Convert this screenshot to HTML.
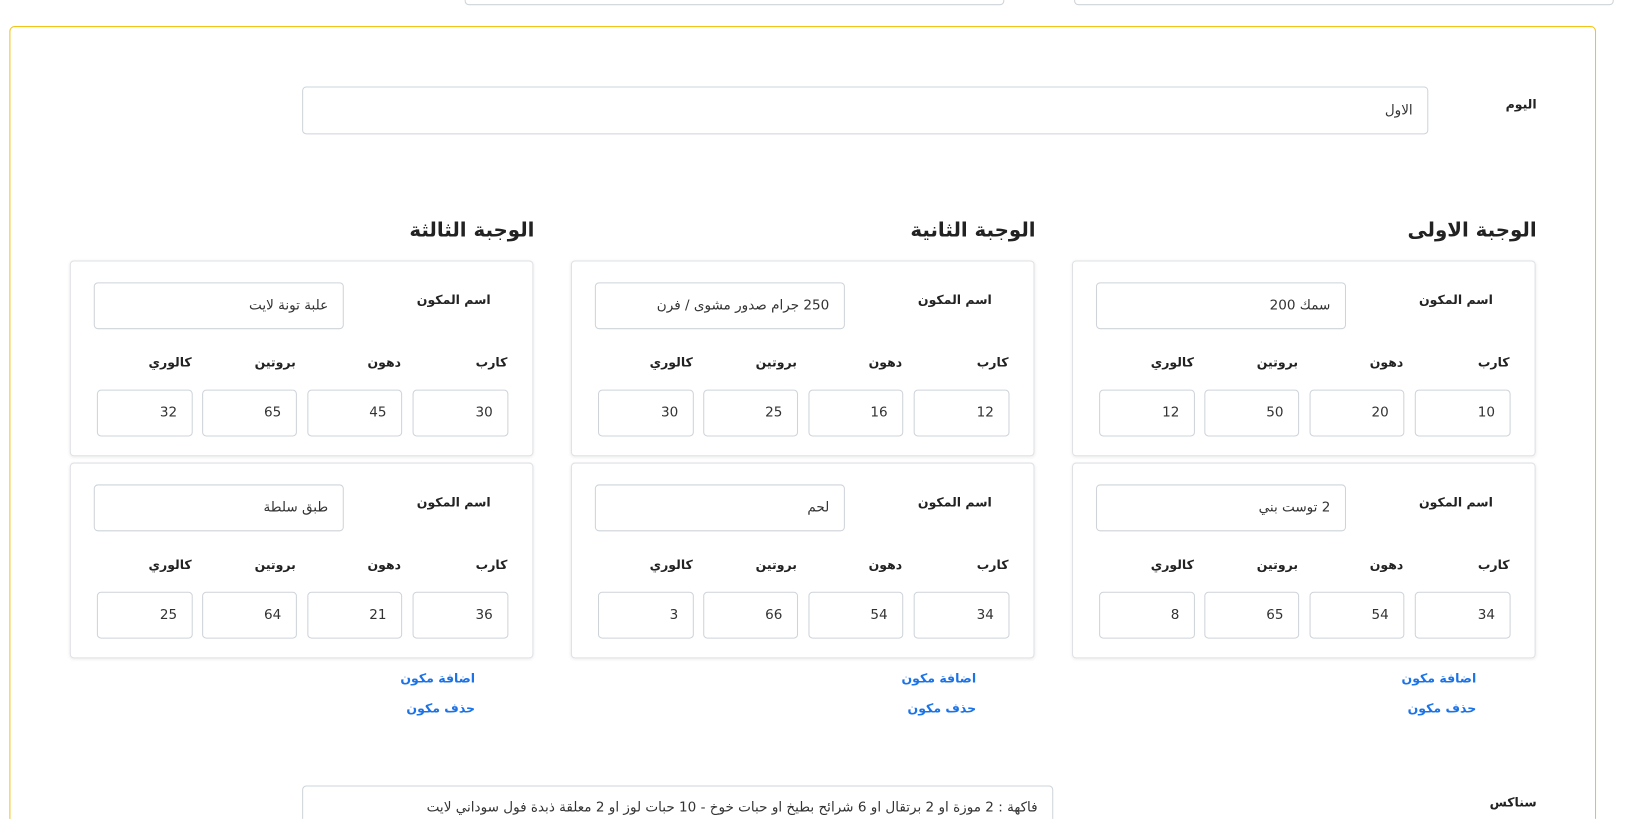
<!DOCTYPE html>
<html><head><meta charset="utf-8"><style>
*{box-sizing:border-box;margin:0;padding:0}
html,body{width:1634px;height:819px;overflow:hidden;background:#fff}
#w{position:absolute;left:0;top:0;width:1568px;height:786px;overflow:hidden;transform:scale(1.0418);transform-origin:0 0;font-family:"DejaVu Sans","Liberation Sans",sans-serif;color:#222;direction:rtl}
.a{position:absolute}
.in{position:absolute;border:1px solid #ced4da;border-radius:4px;background:#fff;font-size:13px;color:#333;text-align:right;padding-right:14px;display:flex;align-items:center}
.lb{position:absolute;font-size:12px;font-weight:bold;color:#222;white-space:nowrap}
.card{position:absolute;width:445px;height:188px;border:1px solid #dfe1e5;border-radius:4px;box-shadow:0 1px 3px rgba(0,0,0,.08);background:#fff}
h3{position:absolute;font-size:19px;font-weight:bold;white-space:nowrap}
.lk{position:absolute;font-size:12px;font-weight:bold;color:#1a73e8;white-space:nowrap}
</style></head><body><div id="w">
<div class="a" style="left:446px;top:-10px;width:518px;height:15px;border:1px solid #ced4da;border-radius:4px"></div>
<div class="a" style="left:1031px;top:-10px;width:518px;height:15px;border:1px solid #ced4da;border-radius:4px"></div>
<div class="a" style="left:9px;top:25px;width:1523px;height:850px;border:1px solid #f2c318;border-radius:5px"></div>

<div class="lb" style="right:93px;top:93px">اليوم</div>
<div class="in" style="left:290px;top:83px;width:1081px;height:46px">الاول</div>

<h3 style="right:93px;top:210px">الوجبة الاولى</h3>
<h3 style="right:574px;top:210px">الوجبة الثانية</h3>
<h3 style="right:1055px;top:210px">الوجبة الثالثة</h3>

<div class="lk" style="right:151px;top:644px">اضافة مكون</div>
<div class="lk" style="right:151px;top:673px">حذف مكون</div>
<div class="lk" style="right:631px;top:644px">اضافة مكون</div>
<div class="lk" style="right:631px;top:673px">حذف مكون</div>
<div class="lk" style="right:1112px;top:644px">اضافة مكون</div>
<div class="lk" style="right:1112px;top:673px">حذف مكون</div>

<div class="lb" style="right:93px;top:763px">سناكس</div>
<div class="in" style="left:290px;top:754px;width:721px;height:46px;align-items:flex-start;padding-top:13px">فاكهة : 2 موزة او 2 برتقال او 6 شرائح بطيخ او  حبات خوخ  - 10 حبات لوز او 2 معلقة ذبدة فول سوداني لايت</div>

<div class="card" style="left:1029px;top:250px">
<div class="lb" style="right:40px;top:30px">اسم المكون</div>
<div class="in" style="left:22px;top:20px;width:240px;height:45px">سمك 200</div>
<div class="lb" style="left:26px;width:90px;top:90px">كالوري</div><div class="lb" style="left:126px;width:90px;top:90px">بروتين</div><div class="lb" style="left:227px;width:90px;top:90px">دهون</div><div class="lb" style="left:328px;width:91px;top:90px">كارب</div>
<div class="in" style="left:25px;top:123px;width:92px;height:45px">12</div><div class="in" style="left:126px;top:123px;width:91px;height:45px">50</div><div class="in" style="left:227px;top:123px;width:91px;height:45px">20</div><div class="in" style="left:328px;top:123px;width:92px;height:45px">10</div>
</div>
<div class="card" style="left:1029px;top:444px">
<div class="lb" style="right:40px;top:30px">اسم المكون</div>
<div class="in" style="left:22px;top:20px;width:240px;height:45px">2 توست بني</div>
<div class="lb" style="left:26px;width:90px;top:90px">كالوري</div><div class="lb" style="left:126px;width:90px;top:90px">بروتين</div><div class="lb" style="left:227px;width:90px;top:90px">دهون</div><div class="lb" style="left:328px;width:91px;top:90px">كارب</div>
<div class="in" style="left:25px;top:123px;width:92px;height:45px">8</div><div class="in" style="left:126px;top:123px;width:91px;height:45px">65</div><div class="in" style="left:227px;top:123px;width:91px;height:45px">54</div><div class="in" style="left:328px;top:123px;width:92px;height:45px">34</div>
</div>
<div class="card" style="left:548px;top:250px">
<div class="lb" style="right:40px;top:30px">اسم المكون</div>
<div class="in" style="left:22px;top:20px;width:240px;height:45px">250 جرام  صدور مشوى / فرن</div>
<div class="lb" style="left:26px;width:90px;top:90px">كالوري</div><div class="lb" style="left:126px;width:90px;top:90px">بروتين</div><div class="lb" style="left:227px;width:90px;top:90px">دهون</div><div class="lb" style="left:328px;width:91px;top:90px">كارب</div>
<div class="in" style="left:25px;top:123px;width:92px;height:45px">30</div><div class="in" style="left:126px;top:123px;width:91px;height:45px">25</div><div class="in" style="left:227px;top:123px;width:91px;height:45px">16</div><div class="in" style="left:328px;top:123px;width:92px;height:45px">12</div>
</div>
<div class="card" style="left:548px;top:444px">
<div class="lb" style="right:40px;top:30px">اسم المكون</div>
<div class="in" style="left:22px;top:20px;width:240px;height:45px">لحم</div>
<div class="lb" style="left:26px;width:90px;top:90px">كالوري</div><div class="lb" style="left:126px;width:90px;top:90px">بروتين</div><div class="lb" style="left:227px;width:90px;top:90px">دهون</div><div class="lb" style="left:328px;width:91px;top:90px">كارب</div>
<div class="in" style="left:25px;top:123px;width:92px;height:45px">3</div><div class="in" style="left:126px;top:123px;width:91px;height:45px">66</div><div class="in" style="left:227px;top:123px;width:91px;height:45px">54</div><div class="in" style="left:328px;top:123px;width:92px;height:45px">34</div>
</div>
<div class="card" style="left:67px;top:250px">
<div class="lb" style="right:40px;top:30px">اسم المكون</div>
<div class="in" style="left:22px;top:20px;width:240px;height:45px">علبة تونة لايت</div>
<div class="lb" style="left:26px;width:90px;top:90px">كالوري</div><div class="lb" style="left:126px;width:90px;top:90px">بروتين</div><div class="lb" style="left:227px;width:90px;top:90px">دهون</div><div class="lb" style="left:328px;width:91px;top:90px">كارب</div>
<div class="in" style="left:25px;top:123px;width:92px;height:45px">32</div><div class="in" style="left:126px;top:123px;width:91px;height:45px">65</div><div class="in" style="left:227px;top:123px;width:91px;height:45px">45</div><div class="in" style="left:328px;top:123px;width:92px;height:45px">30</div>
</div>
<div class="card" style="left:67px;top:444px">
<div class="lb" style="right:40px;top:30px">اسم المكون</div>
<div class="in" style="left:22px;top:20px;width:240px;height:45px">طبق سلطة</div>
<div class="lb" style="left:26px;width:90px;top:90px">كالوري</div><div class="lb" style="left:126px;width:90px;top:90px">بروتين</div><div class="lb" style="left:227px;width:90px;top:90px">دهون</div><div class="lb" style="left:328px;width:91px;top:90px">كارب</div>
<div class="in" style="left:25px;top:123px;width:92px;height:45px">25</div><div class="in" style="left:126px;top:123px;width:91px;height:45px">64</div><div class="in" style="left:227px;top:123px;width:91px;height:45px">21</div><div class="in" style="left:328px;top:123px;width:92px;height:45px">36</div>
</div>
</div></body></html>
